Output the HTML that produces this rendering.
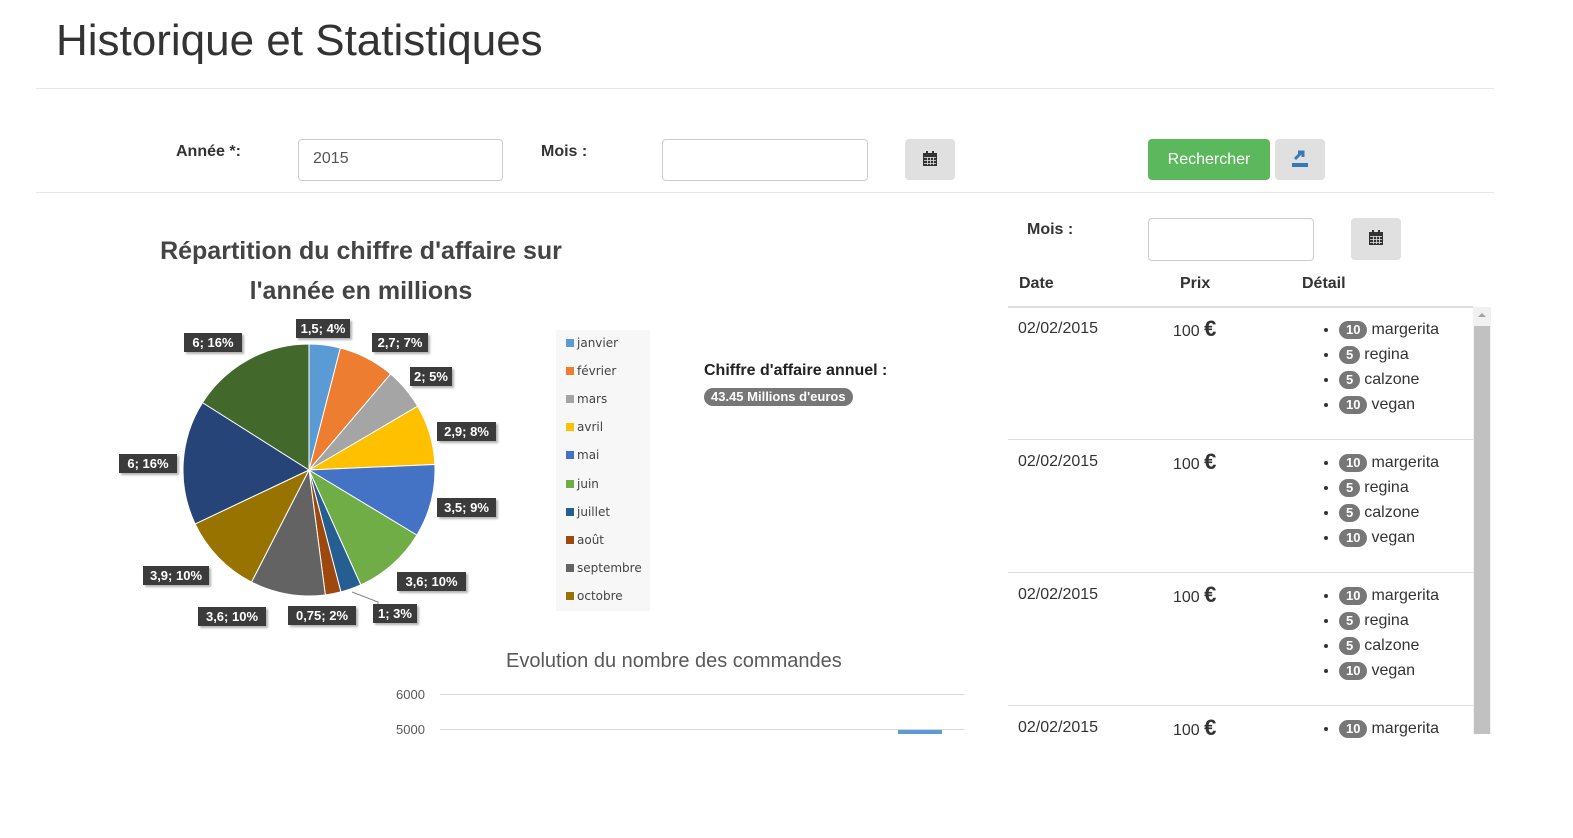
<!DOCTYPE html>
<html><head><meta charset="utf-8"><style>
body{margin:0;width:1573px;height:734px;overflow:hidden;background:#fff;font-family:"Liberation Sans",Arial,sans-serif;color:#333;position:relative}
.a{position:absolute}
h1{position:absolute;left:56px;top:16px;margin:0;font-size:44px;font-weight:400;color:#333;white-space:nowrap}
.hr{position:absolute;left:36px;width:1458px;height:1px;background:#e8e8e8}
.lbl{font-weight:bold;font-size:16px}
.inp{position:absolute;border:1px solid #ccc;border-radius:4px;background:#fff;box-sizing:border-box;font-size:16px;padding:10px 14px;color:#555}
.btn{position:absolute;background:#e0e0e0;border-radius:4px}
.pl{position:absolute;background:#3b3b3b;color:#fff;font-family:"Liberation Sans",sans-serif;font-weight:bold;font-size:13px;line-height:19px;text-align:center;white-space:nowrap;box-shadow:2px 2px 2px rgba(0,0,0,.3)}
.leg{position:absolute;left:566px;font-family:"DejaVu Sans",sans-serif;font-size:12px;color:#444}
.leg i{display:inline-block;width:8px;height:8px;margin-right:3px}
.th{position:absolute;top:275px;font-weight:bold;font-size:16px}
.row{position:absolute;left:1008px;width:465px;border-top:1px solid #ddd;height:132px;font-size:16px}
.row .d{position:absolute;left:10px;top:13px}
.row .p{position:absolute;left:165px;top:9px}
.row .p b{font-size:22px}
.row ul{position:absolute;left:312px;top:10px;margin:0;padding:0 0 0 19px;line-height:25px}
.bd{display:inline-block;background:#777;color:#fff;border-radius:10px;font-size:13px;font-weight:bold;padding:1px 7px;line-height:16px;margin-right:4px}
</style></head><body>
<h1>Historique et Statistiques</h1>
<div class="hr" style="top:88px"></div>
<div class="a lbl" style="left:176px;top:143px">Année *:</div>
<div class="inp" style="left:298px;top:139px;width:205px;height:42px">2015</div>
<div class="a lbl" style="left:541px;top:143px">Mois :</div>
<div class="inp" style="left:662px;top:139px;width:206px;height:42px"></div>
<div class="btn" style="left:905px;top:139px;width:50px;height:41px"><svg class="a" style="left:17px;top:12px" width="16" height="16" viewBox="0 0 16 16"><rect x="1" y="2" width="14" height="13" fill="#333"/><rect x="4" y="0" width="2" height="4" fill="#333"/><rect x="10" y="0" width="2" height="4" fill="#333"/><g fill="#e0e0e0"><rect x="2" y="6" width="12" height=".8"/><rect x="2" y="9" width="12" height=".8"/><rect x="2" y="12" width="12" height=".8"/><rect x="5" y="6" width=".8" height="8"/><rect x="8" y="6" width=".8" height="8"/><rect x="11" y="6" width=".8" height="8"/></g></svg></div>
<div class="a" style="left:1148px;top:139px;width:122px;height:41px;background:#5cb85c;border-radius:4px;color:#fff;font-size:16px;line-height:41px;text-align:center">Rechercher</div>
<div class="btn" style="left:1275px;top:139px;width:50px;height:41px"><svg class="a" style="left:16px;top:10px" width="18" height="20" viewBox="0 0 18 20"><path d="M4 10 L11 3 M7 3 H12 V8" stroke="#337ab7" stroke-width="3" fill="none"/><rect x="1" y="14" width="16" height="4" fill="#337ab7"/></svg></div>
<div class="hr" style="top:192px"></div>

<div class="a" style="left:120px;top:231px;width:482px;text-align:center;font-family:'Liberation Sans',sans-serif;font-weight:bold;font-size:25px;line-height:40px;color:#444;white-space:nowrap">Répartition du chiffre d'affaire sur<br>l'année en millions</div>
<svg class="a" style="left:0;top:0" width="700" height="734" id="pie"></svg>
<div class="pl" style="left:296px;top:319px;width:54px">1,5; 4%</div>
<div class="pl" style="left:372px;top:333px;width:56px">2,7; 7%</div>
<div class="pl" style="left:410px;top:367px;width:42px">2; 5%</div>
<div class="pl" style="left:437px;top:422px;width:59px">2,9; 8%</div>
<div class="pl" style="left:437px;top:498px;width:59px">3,5; 9%</div>
<div class="pl" style="left:397px;top:572px;width:69px">3,6; 10%</div>
<div class="pl" style="left:373px;top:604px;width:44px">1; 3%</div>
<div class="pl" style="left:288px;top:606px;width:68px">0,75; 2%</div>
<div class="pl" style="left:198px;top:607px;width:68px">3,6; 10%</div>
<div class="pl" style="left:143px;top:566px;width:66px">3,9; 10%</div>
<div class="pl" style="left:119px;top:454px;width:58px">6; 16%</div>
<div class="pl" style="left:184px;top:333px;width:58px">6; 16%</div>
<div class="a" style="left:556px;top:330px;width:94px;height:281px;background:#f7f7f7"></div>
<div class="leg" style="top:336px"><i style="background:#5b9bd5"></i>janvier</div>
<div class="leg" style="top:364px"><i style="background:#ed7d31"></i>février</div>
<div class="leg" style="top:392px"><i style="background:#a5a5a5"></i>mars</div>
<div class="leg" style="top:420px"><i style="background:#ffc000"></i>avril</div>
<div class="leg" style="top:448px"><i style="background:#4472c4"></i>mai</div>
<div class="leg" style="top:477px"><i style="background:#70ad47"></i>juin</div>
<div class="leg" style="top:505px"><i style="background:#255e91"></i>juillet</div>
<div class="leg" style="top:533px"><i style="background:#9e480e"></i>août</div>
<div class="leg" style="top:561px"><i style="background:#636363"></i>septembre</div>
<div class="leg" style="top:589px"><i style="background:#997300"></i>octobre</div>
<div class="a lbl" style="left:704px;top:362px;font-size:16px;color:#222">Chiffre d'affaire annuel :</div>
<div class="a" style="left:704px;top:388px;background:#777;color:#fff;border-radius:10px;font-weight:bold;font-size:13px;padding:2px 7px;line-height:14px">43.45 Millions d'euros</div>

<div class="a" style="left:506px;top:650px;font-family:'Liberation Sans',sans-serif;font-size:20px;color:#595959">Evolution du nombre des commandes</div>
<div class="a" style="left:396px;top:687px;font-family:'Liberation Sans',sans-serif;font-size:13px;color:#595959">6000</div>
<div class="a" style="left:440px;top:694px;width:524px;height:1px;background:#d9d9d9"></div>
<div class="a" style="left:396px;top:722px;font-family:'Liberation Sans',sans-serif;font-size:13px;color:#595959">5000</div>
<div class="a" style="left:440px;top:729px;width:524px;height:1px;background:#d9d9d9"></div>
<div class="a" style="left:898px;top:730px;width:44px;height:4px;background:#5b9bd5"></div>

<div class="a lbl" style="left:1027px;top:221px">Mois :</div>
<div class="inp" style="left:1148px;top:218px;width:166px;height:43px"></div>
<div class="btn" style="left:1351px;top:218px;width:50px;height:42px"><svg class="a" style="left:17px;top:12px" width="16" height="16" viewBox="0 0 16 16"><rect x="1" y="2" width="14" height="13" fill="#333"/><rect x="4" y="0" width="2" height="4" fill="#333"/><rect x="10" y="0" width="2" height="4" fill="#333"/><g fill="#e0e0e0"><rect x="2" y="6" width="12" height=".8"/><rect x="2" y="9" width="12" height=".8"/><rect x="2" y="12" width="12" height=".8"/><rect x="5" y="6" width=".8" height="8"/><rect x="8" y="6" width=".8" height="8"/><rect x="11" y="6" width=".8" height="8"/></g></svg></div>
<div class="th" style="left:1019px">Date</div>
<div class="th" style="left:1180px">Prix</div>
<div class="th" style="left:1302px">Détail</div>
<div class="a" style="left:1008px;top:306px;width:465px;height:2px;background:#ddd"></div>
<div class="row" style="top:307px;border:0"><div class="d">02/02/2015</div><div class="p">100 <b>€</b></div><ul><li><span class="bd">10</span>margerita</li><li><span class="bd">5</span>regina</li><li><span class="bd">5</span>calzone</li><li><span class="bd">10</span>vegan</li></ul></div>
<div class="row" style="top:439px"><div class="d">02/02/2015</div><div class="p">100 <b>€</b></div><ul><li><span class="bd">10</span>margerita</li><li><span class="bd">5</span>regina</li><li><span class="bd">5</span>calzone</li><li><span class="bd">10</span>vegan</li></ul></div>
<div class="row" style="top:572px"><div class="d">02/02/2015</div><div class="p">100 <b>€</b></div><ul><li><span class="bd">10</span>margerita</li><li><span class="bd">5</span>regina</li><li><span class="bd">5</span>calzone</li><li><span class="bd">10</span>vegan</li></ul></div>
<div class="row" style="top:705px"><div class="d">02/02/2015</div><div class="p">100 <b>€</b></div><ul><li><span class="bd">10</span>margerita</li></ul></div>
<div class="a" style="left:1473px;top:307px;width:18px;height:427px;background:#f1f1f1"></div>
<div class="a" style="left:1478px;top:313px;width:0;height:0;border:4px solid transparent;border-bottom-color:#a3a3a3;border-top:0"></div>
<div class="a" style="left:1474px;top:326px;width:16px;height:408px;background:#c1c1c1"></div>
<script>
var v=[1.5,2.7,2,2.9,3.5,3.6,1,0.75,3.6,3.9,6,6],c=["#5b9bd5","#ed7d31","#a5a5a5","#ffc000","#4472c4","#70ad47","#255e91","#9e480e","#636363","#997300","#264478","#43682b"];
var t=v.reduce(function(a,b){return a+b}),a=0,cx=309,cy=470,r=126,s="";
for(var i=0;i<v.length;i++){var a2=a+v[i]/t*2*Math.PI;
var x1=cx+r*Math.sin(a),y1=cy-r*Math.cos(a),x2=cx+r*Math.sin(a2),y2=cy-r*Math.cos(a2);
s+='<path d="M'+cx+' '+cy+'L'+x1+' '+y1+'A'+r+' '+r+' 0 '+(a2-a>Math.PI?1:0)+' 1 '+x2+' '+y2+'Z" fill="'+c[i]+'" stroke="#fff" stroke-width="1"/>';a=a2;}
s+='<path d="M352 592 L378 602 L378 612" stroke="#888" fill="none"/>';
document.getElementById("pie").innerHTML=s;
</script>
</body></html>
